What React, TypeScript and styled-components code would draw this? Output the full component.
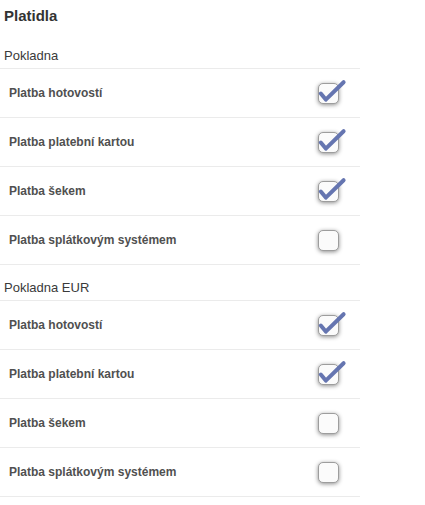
import styled, { createGlobalStyle } from 'styled-components'

const GlobalStyle = createGlobalStyle`
  body {
    margin: 0;
    background: #fff;
    font-family: 'Liberation Sans', Arial, Helvetica, sans-serif;
  }
`

const Panel = styled.div`
  width: 360px;
`

const Title = styled.h2`
  margin: 0;
  padding: 6px 0 7px 4px;
  height: 33px;
  box-sizing: border-box;
  font-size: 15px;
  line-height: 20px;
  font-weight: bold;
  color: #333;
`

const SectionHeader = styled.div`
  height: 36px;
  box-sizing: border-box;
  display: flex;
  align-items: flex-end;
  padding: 0 0 5px 4px;
  border-bottom: 1px solid #ebebeb;
  font-size: 13px;
  line-height: 15px;
  color: #3a3a3a;
`

const Row = styled.label`
  height: 49px;
  box-sizing: border-box;
  display: flex;
  align-items: center;
  justify-content: space-between;
  padding: 0 21px 0 9px;
  border-bottom: 1px solid #ebebeb;
  font-size: 12px;
  font-weight: bold;
  color: #505050;
`

const Box = styled.span`
  position: relative;
  width: 21px;
  height: 21px;
  box-sizing: border-box;
  border: 1px solid #9d9d9d;
  border-radius: 5px;
  background: #fbfbfb;
  box-shadow: 0 1px 4px rgba(0, 0, 0, 0.45);
`

const Tick = styled.svg`
  position: absolute;
  left: -1px;
  top: -7px;
  overflow: visible;
`

const Checkbox = ({ checked }: { checked: boolean }) => (
  <Box>
    {checked && (
      <Tick width="30" height="28" viewBox="0 0 30 28">
        <path
          d="M2.8 16.5 L7.8 22.6 L25.6 5.2"
          fill="none"
          stroke="#6575b0"
          strokeWidth="4"
          strokeLinecap="round"
          strokeLinejoin="round"
        />
      </Tick>
    )}
  </Box>
)

const sections = [
  {
    name: 'Pokladna',
    items: [
      { label: 'Platba hotovostí', checked: true },
      { label: 'Platba platební kartou', checked: true },
      { label: 'Platba šekem', checked: true },
      { label: 'Platba splátkovým systémem', checked: false },
    ],
  },
  {
    name: 'Pokladna EUR',
    items: [
      { label: 'Platba hotovostí', checked: true },
      { label: 'Platba platební kartou', checked: true },
      { label: 'Platba šekem', checked: false },
      { label: 'Platba splátkovým systémem', checked: false },
    ],
  },
]

export default function App() {
  return (
    <>
      <GlobalStyle />
      <Panel>
        <Title>Platidla</Title>
        {sections.map((s) => (
          <div key={s.name}>
            <SectionHeader>{s.name}</SectionHeader>
            {s.items.map((it) => (
              <Row key={it.label}>
                <span>{it.label}</span>
                <Checkbox checked={it.checked} />
              </Row>
            ))}
          </div>
        ))}
      </Panel>
    </>
  )
}
